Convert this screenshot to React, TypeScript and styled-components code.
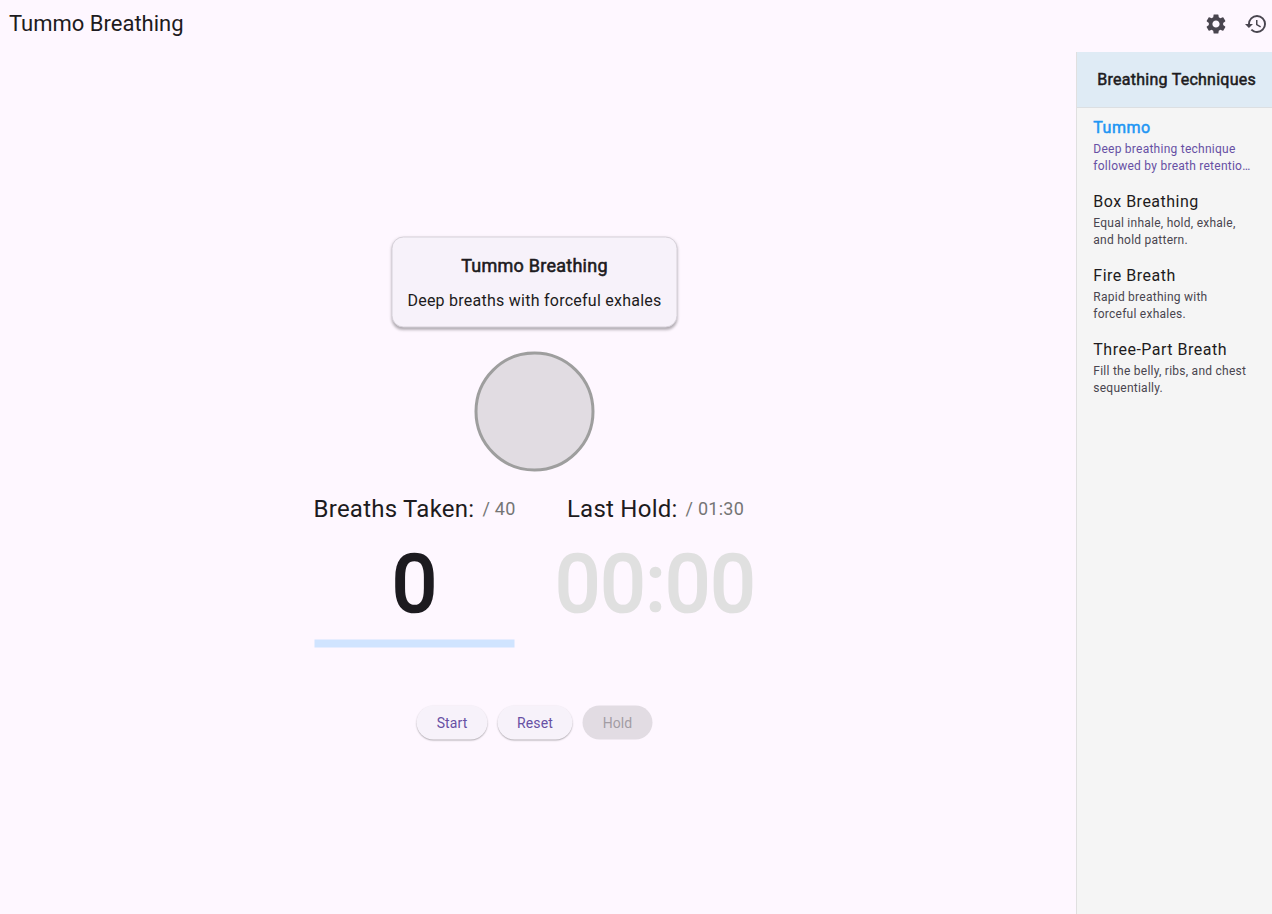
import React from "react";
import styled, { createGlobalStyle } from "styled-components";
import { MdSettings, MdHistory } from "react-icons/md";

const GlobalStyle = createGlobalStyle`
  * { box-sizing: border-box; }
  body {
    margin: 0;
    background: #fef7ff;
    color: #1d1b20;
    font-family: Roboto, sans-serif;
    overflow: hidden;
  }
`;

const Page = styled.div`
  height: 100vh;
  display: flex;
  flex-direction: column;
`;

const TopBar = styled.header`
  height: 52px;
  flex: none;
  display: flex;
  align-items: center;
  justify-content: space-between;
  padding: 0 4px 4px 9px;
`;

const Title = styled.h1`
  margin: 0;
  font-size: 22px;
  line-height: 28px;
  font-weight: 400;
`;

const Actions = styled.div`
  display: flex;
  gap: 16px;
  color: #49454f;
  svg { display: block; }
`;

const Body = styled.div`
  flex: 1;
  display: flex;
  min-height: 0;
`;

const Main = styled.main`
  flex: 1;
  display: flex;
  flex-direction: column;
  align-items: center;
  padding: 184px 8px 0 0;
  transform: translate(0.5px, 0.5px);
`;

const Card = styled.section`
  width: 286px;
  height: 91px;
  padding-top: 16px;
  border: 1.5px solid #d6d1d9;
  border-radius: 12px;
  background: #f7f2fa;
  box-shadow: 0 3px 3px -1px rgba(0, 0, 0, 0.24), 0 1px 3px rgba(0, 0, 0, 0.1);
  text-align: center;
`;

const CardTitle = styled.h2`
  margin: 0 0 11px;
  font-size: 18px;
  line-height: 24px;
  font-weight: 400;
  letter-spacing: 0.25px;
  -webkit-text-stroke: 0.55px currentColor;
`;

const CardText = styled.p`
  margin: 0;
  font-size: 16px;
  line-height: 24px;
  letter-spacing: 0.25px;
  white-space: nowrap;
`;

const Circle = styled.div`
  width: 120px;
  height: 120px;
  margin-top: 24px;
  border: 3px solid #9e9e9e;
  border-radius: 50%;
  background: #e1dce2;
`;

const Stats = styled.div`
  display: flex;
  gap: 41px;
  margin: 19px 0 0 1px;
`;

const Stat = styled.div`
  width: 200px;
  display: flex;
  flex-direction: column;
  align-items: center;
`;

const StatHead = styled.div`
  display: flex;
  align-items: center;
  gap: 8px;
  height: 36px;
  white-space: nowrap;
`;

const StatLabel = styled.span`
  font-size: 24px;
  line-height: 28px;
  letter-spacing: 0.25px;
`;

const StatGoal = styled.span`
  font-size: 18px;
  line-height: 22px;
  padding-bottom: 1px;
  letter-spacing: 0.25px;
  color: #757575;
`;

const StatValue = styled.div<{ $muted?: boolean }>`
  height: 113px;
  line-height: 114px;
  font-size: 80px;
  letter-spacing: 0.25px;
  color: ${(p) => (p.$muted ? "#e0e0e0" : "#1d1b20")};
  -webkit-text-stroke: 2.6px currentColor;
`;

const Progress = styled.div`
  width: 200px;
  height: 8px;
  background: #d0e4ff;
`;

const Buttons = styled.div`
  display: flex;
  gap: 10px;
  margin-top: 58px;
`;

const Button = styled.button<{ $width: number }>`
  width: ${(p) => p.$width}px;
  height: 34px;
  padding: 0;
  border: 0;
  border-radius: 17px;
  background: #f7f2fa;
  color: #6750a4;
  font: 400 14px/20px Roboto, sans-serif;
  letter-spacing: 0.1px;
  box-shadow: 0 1px 1.5px rgba(0, 0, 0, 0.3);
  &:disabled {
    background: #e2dce3;
    color: #a29da4;
    box-shadow: none;
  }
`;

const Sidebar = styled.aside`
  width: 196px;
  flex: none;
  border-left: 1px solid #e0e0e0;
  background: #f5f5f5;
`;

const SidebarHead = styled.h2`
  margin: 0;
  height: 56px;
  padding: 16px 0 0 20.3px;
  border-bottom: 1px solid #dcdfe2;
  background: #dfebf5;
  font-size: 16px;
  line-height: 24px;
  font-weight: 400;
  letter-spacing: 0.25px;
  white-space: nowrap;
  -webkit-text-stroke: 0.5px currentColor;
`;

const Item = styled.div`
  height: 74px;
  padding: 8px 16px 0 16.3px;
`;

const ItemTitle = styled.div<{ $active?: boolean }>`
  font-size: 16px;
  line-height: 24px;
  letter-spacing: 0.5px;
  color: ${(p) => (p.$active ? "#2196f3" : "#1d1b20")};
  -webkit-text-stroke: ${(p) => (p.$active ? "0.5px currentColor" : "0")};
`;

const ItemText = styled.div<{ $active?: boolean }>`
  margin-top: 1px;
  font-size: 12px;
  line-height: 17px;
  letter-spacing: 0.25px;
  white-space: pre;
  color: ${(p) => (p.$active ? "#6750a4" : "#49454f")};
`;

const techniques = [
  { name: "Tummo", text: "Deep breathing technique\nfollowed by breath retentio…", active: true },
  { name: "Box Breathing", text: "Equal inhale, hold, exhale,\nand hold pattern." },
  { name: "Fire Breath", text: "Rapid breathing with\nforceful exhales." },
  { name: "Three-Part Breath", text: "Fill the belly, ribs, and chest\nsequentially." },
];

export default function App() {
  return (
    <Page>
      <GlobalStyle />
      <TopBar>
        <Title>Tummo Breathing</Title>
        <Actions>
          <MdSettings size={24} />
          <MdHistory size={24} />
        </Actions>
      </TopBar>
      <Body>
        <Main>
          <Card>
            <CardTitle>Tummo Breathing</CardTitle>
            <CardText>Deep breaths with forceful exhales</CardText>
          </Card>
          <Circle />
          <Stats>
            <Stat>
              <StatHead>
                <StatLabel>Breaths Taken:</StatLabel>
                <StatGoal>/ 40</StatGoal>
              </StatHead>
              <StatValue>0</StatValue>
              <Progress />
            </Stat>
            <Stat>
              <StatHead>
                <StatLabel>Last Hold:</StatLabel>
                <StatGoal>/ 01:30</StatGoal>
              </StatHead>
              <StatValue $muted>00:00</StatValue>
            </Stat>
          </Stats>
          <Buttons>
            <Button $width={71}>Start</Button>
            <Button $width={75}>Reset</Button>
            <Button $width={70} disabled>Hold</Button>
          </Buttons>
        </Main>
        <Sidebar>
          <SidebarHead>Breathing Techniques</SidebarHead>
          {techniques.map((t) => (
            <Item key={t.name}>
              <ItemTitle $active={t.active}>{t.name}</ItemTitle>
              <ItemText $active={t.active}>{t.text}</ItemText>
            </Item>
          ))}
        </Sidebar>
      </Body>
    </Page>
  );
}
